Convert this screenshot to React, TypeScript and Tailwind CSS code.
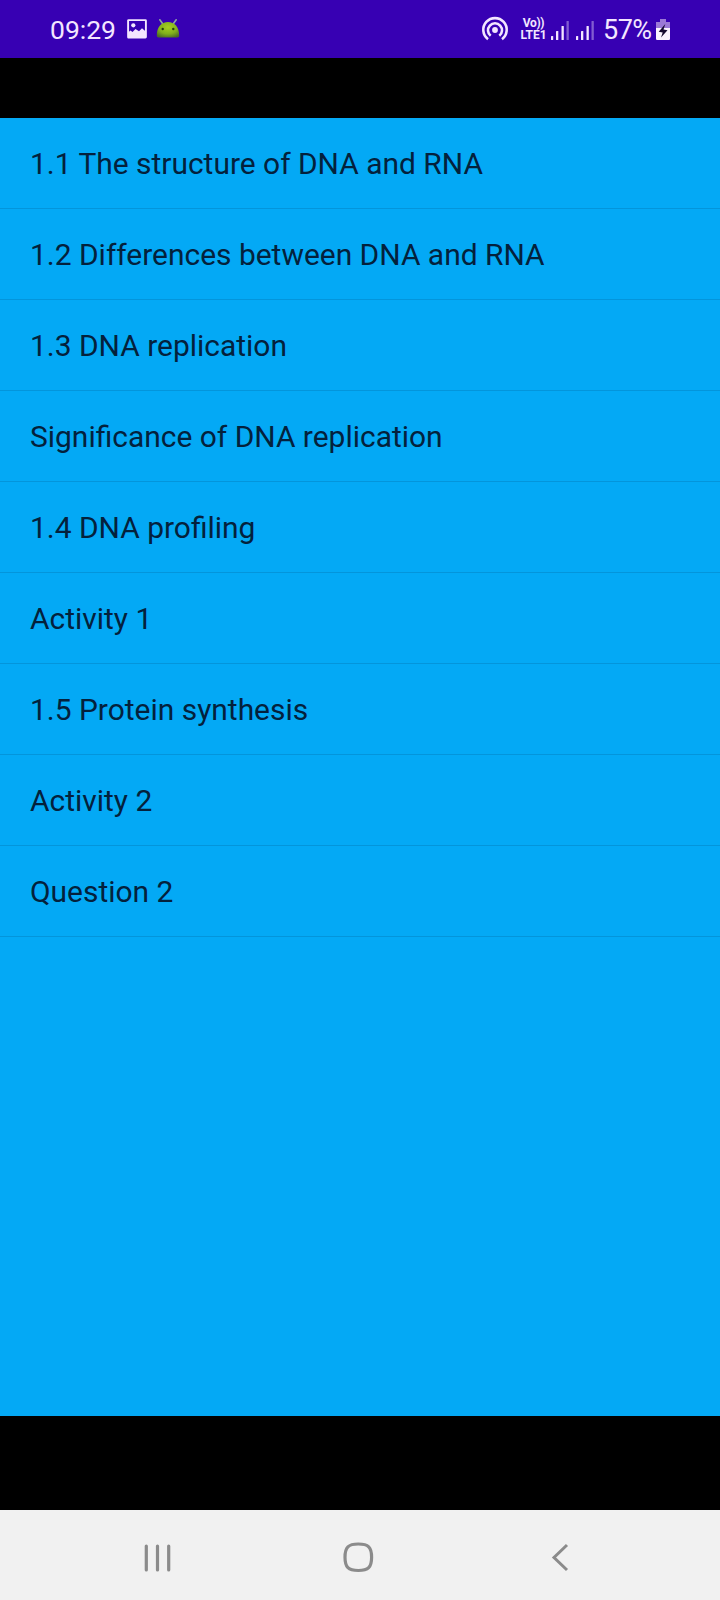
const topics = [
  "1.1 The structure of DNA and RNA",
  "1.2 Differences between DNA and RNA",
  "1.3 DNA replication",
  "Significance of DNA replication",
  "1.4 DNA profiling",
  "Activity 1",
  "1.5 Protein synthesis",
  "Activity 2",
  "Question 2",
]

function PictureIcon() {
  return (
    <svg className="ml-3 h-5 w-5 shrink-0" viewBox="0 0 20 20" fill="none">
      <rect x="1.1" y="1.1" width="17.8" height="17.5" rx="0.5" stroke="#f3e6ff" strokeWidth="1.9" />
      <circle cx="6.3" cy="6.3" r="2.1" fill="#f3e6ff" />
      <path d="M1 13.500 3.500 11.500 5.500 13l3-3 3.500 2.200 3-3 4 3.500v5.800H1z" fill="#f3e6ff" />
    </svg>
  )
}

function AndroidIcon() {
  return (
    <svg className="ml-[9px] h-5 w-6 shrink-0" viewBox="0 0 24 20" fill="none">
      <defs>
        <radialGradient id="droid" cx="0.5" cy="0.35" r="0.7">
          <stop offset="0" stopColor="#a6d01f" />
          <stop offset="0.6" stopColor="#80b01c" />
          <stop offset="1" stopColor="#4c6c24" />
        </radialGradient>
      </defs>
      <path d="M6.500 4.500 3.800.8M17.500 4.500l2.700-3.700" stroke="#8fa3a4" strokeWidth="1.6" strokeLinecap="round" />
      <path d="M.8 16.500C.8 7.700 5.500 2.900 12 2.900S23.200 7.700 23.200 16.500c0 1.300-.8 2-2 2H2.800c-1.200 0-2-.7-2-2z" fill="url(#droid)" />
      <circle cx="6.7" cy="10" r="1.2" fill="#24400f" />
      <circle cx="17.3" cy="10" r="1.2" fill="#24400f" />
    </svg>
  )
}

function HotspotIcon() {
  return (
    <svg className="h-7 w-7 shrink-0" viewBox="0 0 28 28" fill="none" stroke="#f3e6ff" strokeWidth="2.6">
      <circle cx="14" cy="15" r="2.9" fill="#f3e6ff" stroke="none" />
      <path d="M9.700 20.800a7 7 0 1 1 8.600 0" />
      <path d="M7 24.200a11.700 11.700 0 1 1 14 0" />
    </svg>
  )
}

function SignalIcon() {
  return (
    <svg className="h-5 w-[18px] shrink-0" viewBox="0 0 18 20" fill="#f3e6ff">
      <rect x="0" y="15" width="2.2" height="4" rx="0.5" />
      <rect x="5" y="10" width="2.3" height="9" rx="0.5" />
      <rect x="10.5" y="5" width="2.3" height="14" rx="0.5" />
      <rect x="15.5" y="0" width="2.3" height="19" rx="0.5" opacity="0.4" />
    </svg>
  )
}

function BatteryIcon() {
  return (
    <svg className="h-[21px] w-[14px] shrink-0" viewBox="0 0 14 21">
      <path d="M4 0h6v3h4v6H0V3h4z" fill="#9b78d6" />
      <path d="M0 9h14v10.500c0 1-.5 1.500-1.500 1.500h-11C.5 21 0 20.500 0 19.500z" fill="#fbf3ff" />
      <path d="M9.300 5 2.700 12.800l4 .6L5 18.600l6.500-7.400-4-.8z" fill="#160a30" />
    </svg>
  )
}

function StatusBar() {
  return (
    <header className="flex h-[58px] items-center bg-[#3700b3] px-[50px] text-[#f3e6ff]">
      <span className="w-[65px] pt-[3px] text-[26.5px] leading-none whitespace-nowrap">09:29</span>
      <PictureIcon />
      <AndroidIcon />
      <div className="ml-auto flex items-center">
        <HotspotIcon />
        <div className="ml-[11px] flex w-[27px] flex-col items-center pt-px text-[12px] leading-[11.5px] font-bold whitespace-nowrap">
          <span className="tracking-[-0.3px]">Vo))</span>
          <span>LTE1</span>
        </div>
        <div className="ml-1 flex gap-[7px] pt-[3px]">
          <SignalIcon />
          <SignalIcon />
        </div>
        <span className="ml-[9px] w-[53px] pt-[3px] text-[27px] leading-none tracking-[-0.5px] whitespace-nowrap">57%</span>
        <BatteryIcon />
      </div>
    </header>
  )
}

function NavBar() {
  return (
    <nav className="flex h-[90px] items-center justify-between bg-[#f1f1f1] pt-1.5 pr-[151px] pl-[143px]">
      <svg className="h-8 w-7" viewBox="0 0 28 32" fill="none" stroke="#8b8b8b" strokeWidth="3.2" strokeLinecap="round">
        <path d="M3.300 4v24M14.500 4v24M25.700 4v24" />
      </svg>
      <svg className="mr-[5px] h-8 w-8" viewBox="0 0 32 32" fill="none" stroke="#8b8b8b" strokeWidth="3.2">
        <path d="M15.300 2C25.300 2 28.600 5.200 28.600 15.300S25.300 28.500 15.300 28.500 2 25.300 2 15.300 5.300 2 15.300 2z" />
      </svg>
      <svg className="h-8 w-[18px]" viewBox="0 0 18 32" fill="none" stroke="#8b8b8b" strokeWidth="3">
        <path d="M16 3 3 15.500l13 12.500" />
      </svg>
    </nav>
  )
}

export default function App() {
  return (
    <div className="flex h-[1600px] w-[720px] flex-col overflow-hidden bg-black font-['Roboto',sans-serif]">
      <StatusBar />
      <main className="mt-[60px] mb-[94px] flex-1 bg-[#04a9f5]">
        <ul>
          {topics.map((topic) => (
            <li
              key={topic}
              className="flex h-[91px] items-center border-b border-[#0395db] px-[30px] pt-0.5 text-[29.95px] leading-none text-[#04213c]"
            >
              {topic}
            </li>
          ))}
        </ul>
      </main>
      <NavBar />
    </div>
  )
}
